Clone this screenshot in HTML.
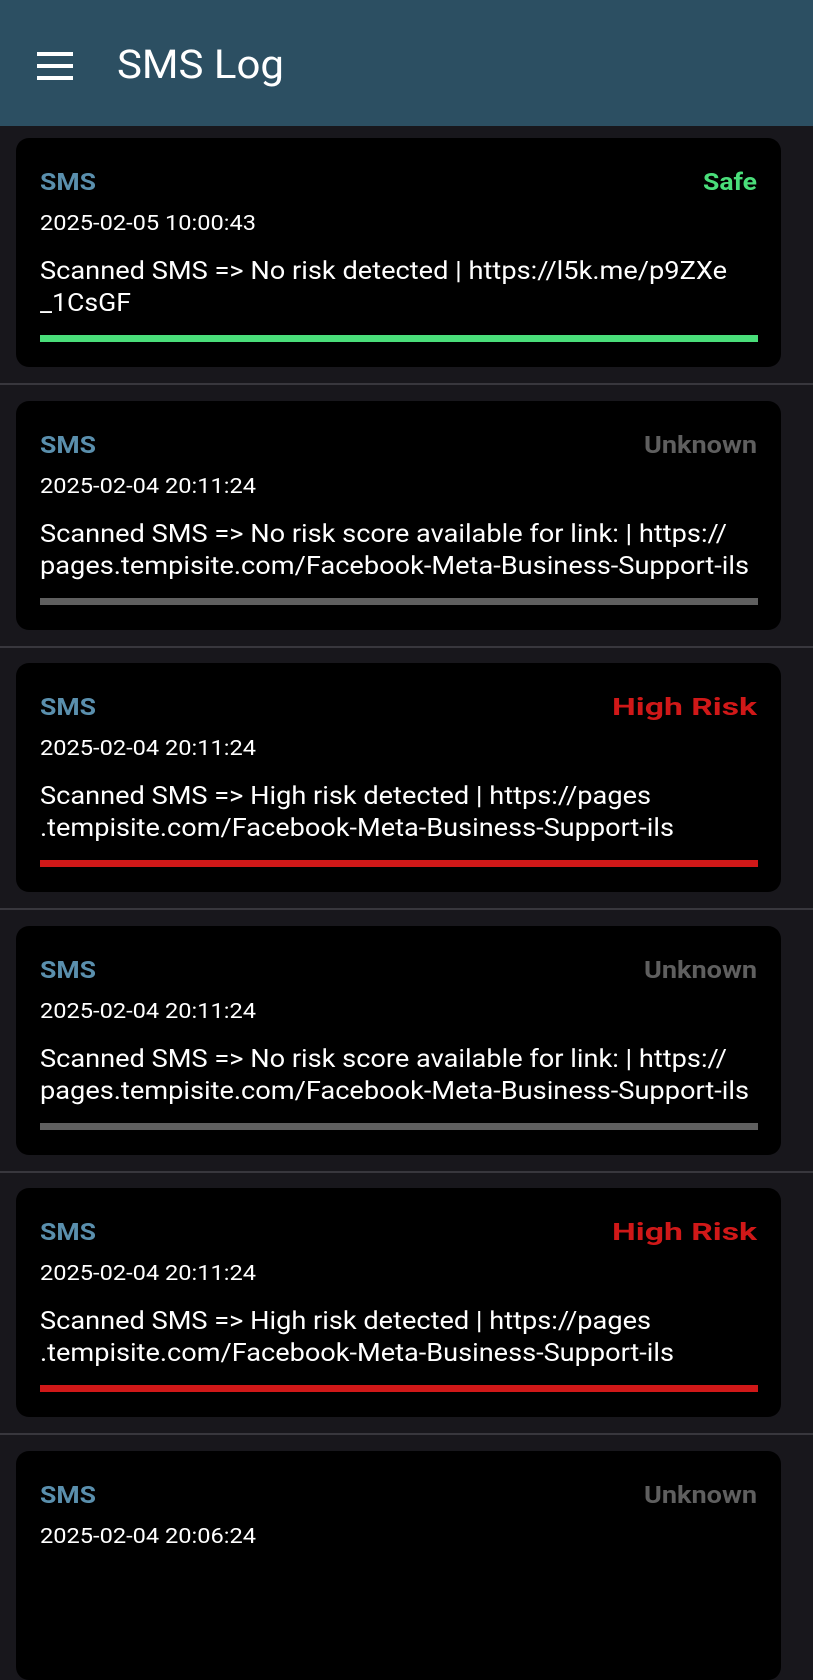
<!DOCTYPE html>
<html><head><meta charset="utf-8"><style>
*{margin:0;padding:0;box-sizing:border-box}
body{width:813px;height:1600px;overflow:hidden;background:#18171c;font-family:"Roboto","Liberation Sans",sans-serif;position:relative}
.hdr{position:absolute;left:0;top:0;width:813px;height:126px;background:#2c4f62}
.hb{position:absolute;left:37px;width:36px;height:4px;background:#fff}
.t{position:absolute;white-space:nowrap;transform-origin:0 0;line-height:1}
.card{position:absolute;left:16px;width:765px;height:229px;background:#000;border-radius:13px}
.sep{position:absolute;left:0;width:813px;height:2px;background:#38373d}
.bar{position:absolute;left:24px;width:718px;height:7px}
</style></head><body>
<div class="hdr">
<div class="hb" style="top:52px"></div><div class="hb" style="top:64px"></div><div class="hb" style="top:76px"></div>
<div class="t" style="left:117px;top:45px;font-size:40px;color:#fff;--w:167">SMS Log</div>
</div>
<div id="list"></div>
<script>
var cards=[
["Safe","#4ade7a",["Scanned SMS => No risk detected | https://l5k.me/p9ZXe","_1CsGF"],[687,91],"2025-02-05 10:00:43",54],
["Unknown","#5f5f5f",["Scanned SMS => No risk score available for link: | https://","pages.tempisite.com/Facebook-Meta-Business-Support-ils"],[687,709],"2025-02-04 20:11:24",113],
["High Risk","#d01818",["Scanned SMS => High risk detected | https://pages",".tempisite.com/Facebook-Meta-Business-Support-ils"],[611,634],"2025-02-04 20:11:24",145],
["Unknown","#5f5f5f",["Scanned SMS => No risk score available for link: | https://","pages.tempisite.com/Facebook-Meta-Business-Support-ils"],[687,709],"2025-02-04 20:11:24",113],
["High Risk","#d01818",["Scanned SMS => High risk detected | https://pages",".tempisite.com/Facebook-Meta-Business-Support-ils"],[611,634],"2025-02-04 20:11:24",145],
["Unknown","#5f5f5f",["",""],[0,0],"2025-02-04 20:06:24",113]
];
var h="";
cards.forEach(function(c,i){
 var top=Math.round(138+i*262.6);
 h+='<div class="card" style="top:'+top+'px">';
 h+='<div class="t" style="left:24px;top:32px;font-size:24px;font-weight:bold;color:#5a8fad;--w:56">SMS</div>';
 h+='<div class="t" style="left:'+(741-c[5])+'px;top:32px;font-size:24px;font-weight:bold;color:'+c[1]+';--w:'+c[5]+'">'+c[0]+'</div>';
 h+='<div class="t" style="left:24px;top:76px;font-size:21px;color:#fff;--w:216">'+c[4]+'</div>';
 if(c[2][0]){
 h+='<div class="t" style="left:24px;top:121px;font-size:25px;color:#fff;--w:'+c[3][0]+'">'+c[2][0]+'</div>';
 h+='<div class="t" style="left:24px;top:153px;font-size:25px;color:#fff;--w:'+c[3][1]+'">'+c[2][1]+'</div>';
 h+='<div class="bar" style="top:197px;background:'+c[1]+'"></div>';}
 h+='</div>';
 if(i<5)h+='<div class="sep" style="top:'+Math.round(383+i*262.6)+'px"></div>';
});
document.getElementById('list').innerHTML=h;
document.querySelectorAll('.t').forEach(function(e){
 var w=parseFloat(getComputedStyle(e).getPropertyValue('--w'));
 if(w){var r=e.getBoundingClientRect().width;if(r)e.style.transform='scaleX('+(w/r)+')';}
});
</script>
</body></html>
